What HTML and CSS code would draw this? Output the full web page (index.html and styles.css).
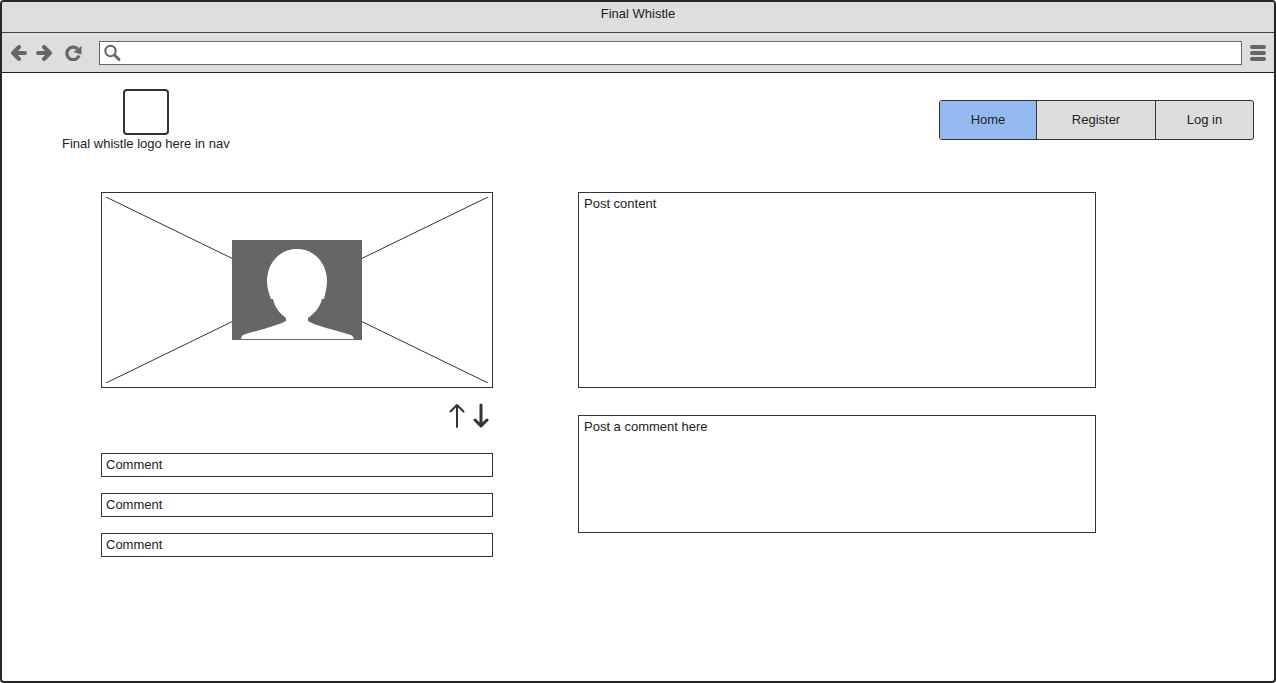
FILE: index.html
```html
<!DOCTYPE html>
<html lang="en">
<head>
<meta charset="utf-8">
<meta name="viewport" content="width=device-width, initial-scale=1">
<title>Final Whistle</title>
<link rel="stylesheet" href="styles.css">
</head>
<body>
<div class="window">
  <div class="titlebar">Final Whistle</div>
  <div class="toolbar">
    <div class="history">
      <button type="button" class="tool" aria-label="Back"><svg width="16" height="16" viewBox="0 0 16 16"><path d="M8 2 2 8l6 6M2.500 8H14" fill="none" stroke="#666" stroke-width="4" stroke-linecap="round" stroke-linejoin="round"/></svg></button>
      <button type="button" class="tool" aria-label="Forward"><svg width="16" height="16" viewBox="0 0 16 16"><path d="M8 2l6 6-6 6M13.500 8H2" fill="none" stroke="#666" stroke-width="4" stroke-linecap="round" stroke-linejoin="round"/></svg></button>
      <button type="button" class="tool reload" aria-label="Reload"><svg width="17" height="16" viewBox="0 0 17 16"><path d="M12.500 3.800A6.300 6.300 0 1 0 14.100 10.500" fill="none" stroke="#666" stroke-width="3.200"/><path d="M16.500 1v8.500L8.500 7z" fill="#666"/></svg></button>
    </div>
    <label class="address">
      <svg width="18" height="18" viewBox="0 0 18 18" aria-hidden="true"><circle cx="6.500" cy="7" r="5.200" fill="none" stroke="#666" stroke-width="2"/><path d="M10.500 11l4.500 4.500" stroke="#666" stroke-width="3" stroke-linecap="round"/></svg>
      <input type="text" aria-label="Address">
    </label>
    <button type="button" class="tool" aria-label="Menu"><svg width="16" height="16" viewBox="0 0 16 16"><path d="M2 2h12M2 8h12M2 14h12" stroke="#666" stroke-width="4" stroke-linecap="round"/></svg></button>
  </div>

  <header class="header">
    <div class="brand">
      <div class="logo"></div>
      <span>Final whistle logo here in nav</span>
    </div>
    <nav class="tabs">
      <a href="#" class="tab active" aria-current="page">Home</a>
      <a href="#" class="tab">Register</a>
      <a href="#" class="tab">Log in</a>
    </nav>
  </header>

  <main class="content">
    <section class="column">
      <div class="picture">
        <svg class="cross" viewBox="0 0 100 100" preserveAspectRatio="none" aria-hidden="true"><path d="M0 0 100 100M100 0 0 100" stroke="#333" vector-effect="non-scaling-stroke"/></svg>
        <svg class="avatar" width="130" height="100" viewBox="0 0 130 100" role="img" aria-label="User photo"><path d="M0 0h130v100H0z" fill="#666"/><path d="M65 9C82 9 95 23 95 41c0 7-2 13-3 18h-2c-2 8-7 14-14 19v3c8 5 24 8 43 14 2 1 2 2 3 4H9c0-2 1-3 2-4 19-6 34-9 43-14v-3c-7-5-11-11-13-19h-2C37 54 35 48 35 41 35 23 48 9 65 9z" fill="#fff"/></svg>
      </div>
      <div class="votes">
        <button type="button" class="vote" aria-label="Vote up"><svg width="16" height="26" viewBox="0 0 16 26"><path d="M8 24V2M1.500 8.500 8 2l6.500 6.500" fill="none" stroke="#333" stroke-width="2" stroke-linecap="round" stroke-linejoin="round"/></svg></button>
        <button type="button" class="vote" aria-label="Vote down"><svg width="16" height="26" viewBox="0 0 16 26"><path d="M8 2v21M2 17l6 6 6-6" fill="none" stroke="#333" stroke-width="3" stroke-linecap="round" stroke-linejoin="round"/></svg></button>
      </div>
      <ul class="comments">
        <li>Comment</li>
        <li>Comment</li>
        <li>Comment</li>
      </ul>
    </section>
    <section class="column">
      <article class="post">Post content</article>
      <textarea class="reply" aria-label="Post a comment here" placeholder="Post a comment here"></textarea>
    </section>
  </main>
</div>
</body>
</html>
```
FILE: styles.css
```css
* {
  box-sizing: border-box;
}

body {
  margin: 0;
  background: #fff;
  color: #222;
  font: 13px/16px "Liberation Sans", Arial, sans-serif;
}

button,
input,
textarea {
  font: inherit;
  color: inherit;
}

.window {
  min-height: 100vh;
  border: 2px solid #282526;
  border-radius: 4px;
  overflow: hidden;
}

.titlebar {
  height: 31px;
  padding-top: 4px;
  background: #dededc;
  border-bottom: 1px solid #444;
  text-align: center;
}

.toolbar {
  display: flex;
  align-items: center;
  gap: 8px;
  height: 40px;
  padding: 0 8px 0 9px;
  background: #dededc;
  border-bottom: 1px solid #222;
}

.history {
  display: flex;
  gap: 9px;
  width: 80px;
}

.tool,
.vote {
  display: flex;
  padding: 0;
  border: 0;
  background: none;
}

.reload {
  margin-left: 4px;
}

.address {
  display: flex;
  flex: 1;
  align-items: center;
  height: 24px;
  padding: 0 4px;
  background: #fff;
  border: 1px solid #666;
}

.address input {
  flex: 1;
  min-width: 0;
  border: 0;
  outline: 0;
  background: none;
}

.header {
  display: flex;
  justify-content: space-between;
  align-items: flex-start;
  padding: 16px 20px 0 60px;
}

.brand {
  display: flex;
  flex-direction: column;
  align-items: center;
  gap: 1px;
}

.logo {
  width: 46px;
  height: 46px;
  border: 2px solid #333;
  border-radius: 4px;
}

.tabs {
  display: grid;
  grid-template-columns: 96px 119px 98px;
  height: 40px;
  margin-top: 11px;
  border: 1px solid #333;
  border-radius: 3px;
  overflow: hidden;
  background: #ddd;
}

.tab {
  display: flex;
  align-items: center;
  justify-content: center;
  color: #222;
  text-decoration: none;
}

.tab + .tab {
  border-left: 1px solid #333;
}

.active {
  background: #94b9f1;
}

.content {
  display: grid;
  grid-template-columns: 392fr 518fr;
  gap: 85px;
  padding: 40px 178px 24px 99px;
}

.picture {
  display: grid;
  place-items: center;
  height: 196px;
  padding: 4px;
  border: 1px solid #333;
}

.cross,
.avatar {
  grid-area: 1 / 1;
}

.cross {
  width: 100%;
  height: 186px;
}

.avatar {
  z-index: 1;
}

.votes {
  display: flex;
  justify-content: flex-end;
  gap: 8px;
  padding: 15px 4px 24px;
}

.comments {
  display: grid;
  gap: 16px;
  margin: 0;
  padding: 0;
  list-style: none;
}

.comments li {
  padding: 3px 4px;
  border: 1px solid #333;
}

.post,
.reply {
  display: block;
  width: 100%;
  padding: 3px 5px;
  border: 1px solid #333;
}

.post {
  height: 196px;
}

.reply {
  height: 118px;
  margin-top: 27px;
  resize: none;
}

.reply::placeholder {
  color: #222;
}
```
